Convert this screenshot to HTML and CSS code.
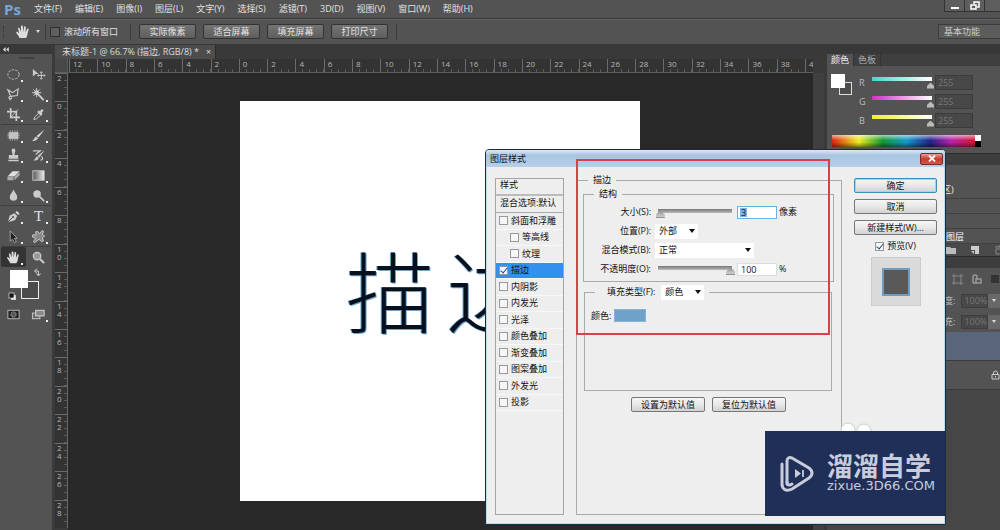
FILE: index.html
```html
<!DOCTYPE html>
<html lang="zh-CN">
<head>
<meta charset="utf-8">
<title>未标题-1</title>
<link rel="stylesheet" href="styles.css">
</head>
<body>
<header class="menubar">
  <span class="logo">Ps</span>
  <nav class="menus">
    <a href="#">文件(F)</a><a href="#">编辑(E)</a><a href="#">图像(I)</a><a href="#">图层(L)</a><a href="#">文字(Y)</a><a href="#">选择(S)</a><a href="#">滤镜(T)</a><a href="#">3D(D)</a><a href="#">视图(V)</a><a href="#">窗口(W)</a><a href="#">帮助(H)</a>
  </nav>
  <div class="winbtns">
    <button aria-label="最小化"><svg width="10" height="10" viewBox="0 0 10 10"><path d="M1 7h8" stroke="#fff" stroke-width="2"/></svg></button>
    <button aria-label="还原"><svg width="10" height="10" viewBox="0 0 10 10" fill="none" stroke="#fff" stroke-width="1.5"><path d="M4 3V1h5v5H7M1 4h5v4H1z"/></svg></button>
    <button aria-label="关闭"></button>
  </div>
</header>

<div class="options">
  <span class="grip"></span>
  <svg class="hand" width="16" height="16" viewBox="0 0 16 16"><use href="#i-hand"/></svg>
  <span class="caret light"></span>
  <span class="sep"></span>
  <label class="check dark"><input type="checkbox">滚动所有窗口</label>
  <span class="sep wide"></span>
  <div class="viewbtns">
    <button>实际像素</button><button>适合屏幕</button><button>填充屏幕</button><button>打印尺寸</button>
  </div>
  <span class="sep"></span>
  <button class="workspace-name">基本功能</button>
</div>

<main class="workspace">
  <aside class="tools">
    <div class="tools-head"><svg width="6" height="5" viewBox="0 0 6 5"><path d="M2.6 0v5L0 2.500zM5.800 0v5L3.200 2.500z" fill="#ddd"/></svg></div>
    <span class="tools-grip"></span>
    <div class="toolgroup">
      <button class="more" aria-label="椭圆选框"><svg viewBox="0 0 16 16"><ellipse cx="8" cy="8" rx="6" ry="5" fill="none" stroke="#ccc" stroke-dasharray="2.500 1.400"/></svg></button>
      <button aria-label="移动"><svg viewBox="0 0 16 16"><path d="M2 2l6 5.500H5L2 10z" fill="#ccc"/><path d="M11 5v8M7 9h8M9.800 6.200L11 5l1.200 1.200M9.800 11.800L11 13l1.200-1.200M8.200 7.800L7 9l1.200 1.200M13.800 7.800L15 9l-1.200 1.200" stroke="#ccc" fill="none"/></svg></button>
      <button class="more" aria-label="套索"><svg viewBox="0 0 16 16"><path d="M2 3l5 3 6-4-1 7-7 1zM5 10c-3 0-2 3 0 2.500S6 10 4 14" fill="none" stroke="#ccc" stroke-width="1.200"/></svg></button>
      <button class="more" aria-label="魔棒"><svg viewBox="0 0 16 16"><path d="M6.500 6.500L13.500 14" stroke="#ccc" stroke-width="2"/><path d="M6 1v10M1 6h10M2.500 2.500l7 7M9.500 2.500l-7 7" stroke="#ccc"/><circle cx="6" cy="6" r="2.500" fill="#ccc"/></svg></button>
      <button class="more" aria-label="裁剪"><svg viewBox="0 0 16 16"><path d="M5 1v10h10M1 5h10v10" fill="none" stroke="#ccc" stroke-width="1.800"/><path d="M5 11l8-8.500" stroke="#ccc" stroke-width=".8"/></svg></button>
      <button class="more" aria-label="吸管"><svg viewBox="0 0 16 16"><path d="M3 13.500l1-3L9 6l2 2-5 4.500z" fill="none" stroke="#ccc"/><path d="M7.500 4.500l4 4M9.500 6.500l3-3.500" stroke="#ccc" stroke-width="2.600"/></svg></button>
    </div>
    <div class="toolgroup">
      <button class="more" aria-label="修复画笔"><svg viewBox="0 0 16 16"><rect x="3" y="4.500" width="10" height="7" fill="#ccc"/><path d="M4.500 2.500v11M7 2.500v11M9.500 2.500v11M12 2.500v11M1.500 6h13M1.500 8h13M1.500 10h13" stroke="#bbb" stroke-width=".8"/></svg></button>
      <button class="more" aria-label="画笔"><svg viewBox="0 0 16 16"><path d="M14.500 1.500L8 10 6 8.500z" fill="#ddd"/><path d="M5.500 9l2 2C6 14 3 14 1 13.500 4 12.500 3 10 5.500 9z" fill="#ccc"/></svg></button>
      <button class="more" aria-label="图章"><svg viewBox="0 0 16 16"><path d="M6 2.500a2 2 0 0 1 4 0c0 2-1 3-1 5h4v4H3v-4h4c0-2-1-3-1-5zM2.500 12.500h11V14h-11z" fill="#ccc"/></svg></button>
      <button class="more" aria-label="历史画笔"><svg viewBox="0 0 16 16"><path d="M14.500 2.500L9 10 7 8.500zM6.500 9l2 1.500C7 13.500 5 13.500 2 13.500 5 12 4.500 10 6.500 9z" fill="#ccc"/><path d="M2 3h8L5 7M11 9c2 1 2 4-1 4" stroke="#ccc" stroke-width="1.300" fill="none"/></svg></button>
      <button class="more" aria-label="橡皮擦"><svg viewBox="0 0 16 16"><path d="M7 3.500h7.500L9 9H1.500z" fill="#ddd"/><path d="M1.500 9.500H8V13H1.500zM9 9.500l5.500-5.300v3.500L9 13z" fill="#aaa"/></svg></button>
      <button class="more" aria-label="渐变"><svg viewBox="0 0 16 16"><defs><linearGradient id="fade"><stop stop-color="#555"/><stop offset="1" stop-color="#eee"/></linearGradient></defs><rect x="2" y="3" width="12" height="10" fill="url(#fade)" stroke="#ccc"/></svg></button>
      <button class="more" aria-label="模糊"><svg viewBox="0 0 16 16"><path d="M8 1.500c1 3 4 5 4 8a4 4 0 0 1-8 0c0-3 3-5 4-8z" fill="#ccc"/></svg></button>
      <button class="more" aria-label="减淡"><svg viewBox="0 0 16 16"><circle cx="6.500" cy="6.500" r="4" fill="#ccc"/><path d="M9 9l5 5" stroke="#ccc" stroke-width="1.800"/></svg></button>
    </div>
    <div class="toolgroup">
      <button class="more" aria-label="钢笔"><svg viewBox="0 0 16 16"><path d="M2 14l2-7 5-2.500 3 3L9.500 12z" fill="#ccc"/><path d="M10 3.500l3 3 1.500-1.500-3-3z" fill="#ddd"/><path d="M2 14l5-5" stroke="#444"/><circle cx="7.500" cy="8.500" r="1" fill="#444"/></svg></button>
      <button class="more tletter" aria-label="文字">T</button>
      <button class="more" aria-label="路径选择"><svg viewBox="0 0 16 16"><path d="M4.500 2v11l2.500-2 2 3.500 2-1-2-3.500h3z" fill="#222" stroke="#bbb" stroke-width=".8"/></svg></button>
      <button class="more" aria-label="自定形状"><svg viewBox="0 0 16 16"><path d="M9 5l3-3.500 1.500 1L12 6l2.500 1.500L12 9.500l1.500 3-2 1L8.500 11 4 14.500l-1.500-1L5 10 1.500 8.500 2 6l3.500.5L5 3l2-.5z" fill="#888" stroke="#ccc" stroke-linejoin="round"/></svg></button>
    </div>
    <div class="toolgroup">
      <button class="more active" aria-label="抓手"><svg viewBox="0 0 16 16"><g id="i-hand"><path d="M4.500 14C4 12 1.500 10 1 8c.8-.8 2 0 3 1.500L3 4c1-.8 1.700 0 2 1l1 3L6 2c.9-.9 1.800-.3 1.900.5L8.300 8l.9-5.500c.9-.8 1.700-.2 1.600.8L10.600 8.500l1.600-3.700c.9-.6 1.600 0 1.400.9L12.500 10c0 2-1 3-1.500 4z" fill="#ddd"/></g></svg></button>
      <button aria-label="缩放"><svg viewBox="0 0 16 16"><circle cx="6.500" cy="6.500" r="4" fill="#999" stroke="#ccc" stroke-width="1.300"/><path d="M9.500 9.500l4.500 4.500" stroke="#ccc" stroke-width="2.200"/></svg></button>
    </div>
    <svg class="colors" width="50" height="37" viewBox="0 0 50 37"><rect x="20.500" y="14.500" width="17" height="17" fill="#4c4c4c" stroke="#eee"/><rect x="9" y="3" width="18" height="18" fill="#fff"/><path d="M34 4h3.500v4M36 1.500L33.500 4 36 6.500M35.500 6.500L37.500 9l2-2.500" fill="none" stroke="#ccc"/><rect x="10.500" y="28.500" width="4" height="4" fill="#fff" stroke="#ccc"/><rect x="8" y="26" width="5" height="5" fill="#111" stroke="#ccc" stroke-width=".8"/></svg>
    <div class="toolgroup modes">
      <button aria-label="快速蒙版"><svg viewBox="0 0 16 16"><rect x="2" y="3.500" width="12" height="9" fill="#222" stroke="#bbb"/><circle cx="8" cy="8" r="2.800" fill="#555" stroke="#bbb" stroke-dasharray="1.500 1"/></svg></button>
      <button class="more" aria-label="屏幕模式"><svg viewBox="0 0 16 16"><rect x="1.500" y="6.500" width="8" height="6" fill="#666" stroke="#ccc"/><rect x="5" y="3.500" width="9" height="6" fill="#888" stroke="#ddd"/></svg></button>
    </div>
  </aside>

  <section class="document">
    <div class="doc-tabs"><div class="doc-tab"><span>未标题-1 @ 66.7% (描边, RGB/8) *</span><button aria-label="关闭文档">×</button></div></div>
    <div class="hruler"><span class="corner"></span><div class="hmarks"><span>12</span><span>10</span><span>8</span><span>6</span><span>4</span><span>2</span><span>0</span><span>2</span><span>4</span><span>6</span><span>8</span><span>10</span><span>12</span><span>14</span><span>16</span><span>18</span><span>20</span><span>22</span><span>24</span><span>26</span><span>28</span><span>30</span><span>32</span><span>34</span><span>36</span><span>38</span></div><span class="hlast">4</span></div>
    <div class="stage">
      <div class="vruler"><span>2</span><span>0</span><span>2</span><span>4</span><span>6</span><span>8</span><span>10</span><span>12</span><span>14</span><span>16</span><span>18</span><span>20</span><span>22</span><span>24</span><span>26</span><span>28</span></div>
      <div class="pasteboard"><div class="artboard"><span>描</span><span>边</span></div></div>
      <div class="vscroll"></div>
    </div>
  </section>

  <aside class="panels">
    <div class="tabs"><button class="on">颜色</button><button>色板</button></div>
    <div class="color-panel">
      <svg width="22" height="24" viewBox="0 0 22 24"><rect x="8.500" y="9.500" width="12" height="12" fill="#4c4c4c" stroke="#ddd"/><rect width="14" height="14" y="1" fill="#fff"/></svg>
      <div class="channels">
        <div class="channel"><label for="r">R</label><input class="ramp cyan" type="range" max="255" value="255" aria-label="R"><input class="num" id="r" value="255"></div>
        <div class="channel"><label for="g">G</label><input class="ramp magenta" type="range" max="255" value="255" aria-label="G"><input class="num" id="g" value="255"></div>
        <div class="channel"><label for="b">B</label><input class="ramp yellow" type="range" max="255" value="255" aria-label="B"><input class="num" id="b" value="255"></div>
      </div>
    </div>
    <div class="spectrum"><span></span></div>
    <div class="band"></div>
    <div class="history">
      <div class="hrow tall">区)</div>
      <div class="hrow"></div>
      <div class="hrow"></div>
      <div class="hrow last">图层</div>
      <div class="hicons">
        <svg width="10" height="10" viewBox="0 0 10 10"><path d="M0 2h4l1 1h5v6H0z" fill="#bbb"/></svg>
        <svg width="10" height="10" viewBox="0 0 10 10"><path d="M1 1h8v8H5V5H1z" fill="#ccc"/><path d="M1 6l3 3V6z" fill="#ccc"/></svg>
        <svg width="10" height="10" viewBox="0 0 10 10"><path d="M1 2h8M2 4h6v5H2zM4 1h2" stroke="#888" fill="none"/></svg>
      </div>
    </div>
    <div class="band"></div>
    <div class="layers">
      <div class="licons">
        <svg width="11" height="11" viewBox="0 0 11 11"><path d="M2 2h7v7H2zM0 2h2V0M9 0v2h2M0 9h2v2M9 11V9h2" fill="none" stroke="#888"/></svg>
        <svg width="11" height="11" viewBox="0 0 11 11"><path d="M2 9V3a2 2 0 0 1 4 0v2M2 9h8V5H5v4" fill="none" stroke="#999" stroke-width="1.500"/></svg>
        <svg width="11" height="11" viewBox="0 0 11 11"><path d="M1 1h8v8H1z" fill="#333"/></svg>
      </div>
      <div class="lfield"><span>度:</span><output>100%</output><button aria-label="不透明度"><i class="caret light"></i></button></div>
      <div class="lfield"><span>充:</span><output>100%</output><button aria-label="填充"><i class="caret light"></i></button></div>
      <div class="layer selected"></div>
      <div class="layer"><svg width="9" height="10" viewBox="0 0 9 10"><path d="M2.500 4V3a2 2 0 0 1 4 0v1M1 4.500h7v4.500H1zM4.500 6v1.500" fill="none" stroke="#ccc"/></svg></div>
    </div>
    <div class="panel-foot"></div>
  </aside>
</main>

<section class="dialog" role="dialog" aria-label="图层样式">
  <div class="title"><h1>图层样式</h1><button class="close" aria-label="关闭"><svg width="8" height="7" viewBox="0 0 8 7"><path d="M1 .5l6 6M7 .5l-6 6" stroke="#fff" stroke-width="1.800"/></svg></button></div>
  <div class="body">
    <div class="styles">
      <div class="shead">样式</div>
      <div class="shead blend">混合选项:默认</div>
      <div class="slist">
        <label class="check"><input type="checkbox">斜面和浮雕</label>
        <label class="check sub"><input type="checkbox">等高线</label>
        <label class="check sub"><input type="checkbox">纹理</label>
        <label class="check current"><input type="checkbox" checked>描边</label>
        <label class="check"><input type="checkbox">内阴影</label>
        <label class="check"><input type="checkbox">内发光</label>
        <label class="check"><input type="checkbox">光泽</label>
        <label class="check"><input type="checkbox">颜色叠加</label>
        <label class="check"><input type="checkbox">渐变叠加</label>
        <label class="check"><input type="checkbox">图案叠加</label>
        <label class="check"><input type="checkbox">外发光</label>
        <label class="check"><input type="checkbox">投影</label>
      </div>
    </div>

    <fieldset class="stroke">
      <legend>描边</legend>
      <fieldset class="structure">
        <legend>结构</legend>
        <div class="rows">
          <label for="size">大小(S):</label>
          <div class="ctl"><input class="slide" type="range" max="250" value="3" aria-label="大小"><input class="box focus" id="size" value="3"><span>像素</span></div>
          <label for="pos">位置(P):</label>
          <div class="ctl"><span class="pick short"><select id="pos"><option>外部</option></select><i class="caret"></i></span></div>
          <label for="mode">混合模式(B):</label>
          <div class="ctl"><span class="pick long"><select id="mode"><option>正常</option></select><i class="caret"></i></span></div>
          <label for="opa">不透明度(O):</label>
          <div class="ctl"><input class="slide" type="range" value="100" aria-label="不透明度"><input class="box" id="opa" value="100"><span>%</span></div>
        </div>
      </fieldset>
      <fieldset class="fill">
        <legend><label for="filltype">填充类型(F):</label><span class="pick short"><select id="filltype"><option>颜色</option></select><i class="caret"></i></span></legend>
        <div class="fillcolor"><span>颜色:</span><button aria-label="描边颜色"></button></div>
      </fieldset>
      <div class="defaults"><button class="btn">设置为默认值</button><button class="btn">复位为默认值</button></div>
    </fieldset>

    <div class="actions">
      <button class="btn primary">确定</button>
      <button class="btn">取消</button>
      <button class="btn">新建样式(W)...</button>
      <label class="check preview"><input type="checkbox" checked>预览(V)</label>
      <div class="thumb"><span></span></div>
    </div>
  </div>
  <div class="highlight"></div>
</section>

<div class="brand">
  <svg class="puffs" width="32" height="9" viewBox="0 0 32 9"><circle cx="8" cy="8" r="7" fill="#fff" stroke="#ccc"/><circle cx="24" cy="9" r="7" fill="#fff" stroke="#ccc"/></svg>
  <svg width="36" height="38" viewBox="0 0 36 38" fill="none" stroke="#c9cddb" stroke-linecap="round" stroke-linejoin="round"><path d="M8 29V6c0-3 2-4 5-3l17 10c4 3 4 7 0 10L13 34c-6 3-10 0-10-5V9" stroke-width="3"/><path d="M8 27c0 3 2 4 5 2" stroke-width="3"/><path d="M16 14v9l6-4.500z" fill="#c9cddb" stroke="none"/><path d="M24 15v7" stroke-width="1.800" stroke-linecap="butt"/></svg>
  <div class="brand-text"><strong>溜溜自学</strong><span>zixue.3D66.COM</span></div>
</div>
</body>
</html>
```
FILE: styles.css
```css
* { box-sizing: border-box; }
body {
  margin: 0; height: 100vh; overflow: hidden; position: relative;
  display: flex; flex-direction: column;
  background: #535353; color: #e2e2e2;
  font: 9px/12px "Open Sans", "Noto Sans CJK SC", sans-serif;
}
button, input, select, output { font: inherit; color: inherit; margin: 0; padding: 0; border: 0; background: none; border-radius: 0; }
button { display: flex; align-items: center; justify-content: center; white-space: nowrap; }
a { color: inherit; text-decoration: none; }
svg { display: block; flex: none; }
.caret { width: 0; height: 0; border: 3px solid transparent; border-top: 4px solid #111; border-bottom: 0; }
.caret.light { border-width: 3px 2px 0; border-top-color: #ddd; }

/* menu bar */
.menubar { flex: none; height: 18px; display: flex; align-items: center; padding-left: 4px; }
.logo { width: 30px; color: #76a5d8; font: bold 15px/16px "Open Sans", sans-serif; }
.menus { display: flex; gap: 13px; white-space: nowrap; }
.winbtns { margin-left: auto; align-self: flex-start; display: flex; height: 12px; border: 1px solid #333; border-width: 0 0 1px 1px; }
.winbtns button { width: 20px; border-right: 1px solid #333; background: #5e5e5e; }
.winbtns button:last-child { width: 15px; border: 0; }

/* options bar */
.options { flex: none; height: 27px; display: flex; align-items: center; border: 1px solid #383838; border-width: 1px 0; box-shadow: inset 0 1px #626262; padding-left: 3px; }
.grip { width: 2px; height: 12px; border-left: 1px dotted #333; margin-right: 10px; }
.hand { margin-right: 5px; }
.sep { width: 1px; height: 16px; background: #3c3c3c; margin: 0 4px 0 5px; }
.sep.wide { margin: 0 8px 0 12px; }
.check { display: flex; align-items: center; gap: 3px; white-space: nowrap; }
.check input { appearance: none; width: 9px; height: 9px; border: 1px solid #999; background: #f6f6f6; display: grid; place-items: center; }
.check input:checked::before { content: ""; width: 3px; height: 6px; margin-top: -2px; border: solid #234a80; border-width: 0 1px 1px 0; transform: rotate(40deg); }
.check.dark { gap: 4px; }
.check.dark input { width: 10px; height: 10px; background: #5f5f5f; border-color: #2f2f2f; }
.viewbtns { display: flex; gap: 7px; }
.viewbtns button { width: 57px; height: 15px; border: 1px solid #333; border-radius: 2px; background: linear-gradient(#747474, #5e5e5e); }
.viewbtns + .sep { margin-left: 8px; }
.workspace-name { margin-left: auto; width: 62px; height: 15px; border: 1px solid #3d3d3d; border-right: 0; background: #5c5c5c; justify-content: flex-start; padding-left: 5px; color: #ccc; }

.workspace { flex: 1; min-height: 0; display: flex; background: #3a3a3a; }

/* tools */
.tools { width: 52px; background: #535353; display: flex; flex-direction: column; }
.tools-head { height: 9px; background: #383838; padding: 2px 3px; }
.tools-grip { width: 15px; height: 2px; background: #404040; margin: 3px 0 5px 19px; }
.toolgroup { display: grid; grid-template-columns: 25px 25px; grid-auto-rows: 20px; margin: 0 1px; border-bottom: 1px solid #404040; }
.toolgroup:nth-last-child(-n+3) { border: 0; }
.toolgroup button { position: relative; }
.toolgroup svg { width: 15px; height: 15px; }
.toolgroup .more::after { content: ""; position: absolute; right: 3px; bottom: 2px; width: 2px; height: 2px; background: #eee; }
.tools .active { background: #343434; border-radius: 2px; }
.tletter { font: 15px/16px "Liberation Serif", serif; }
.colors { margin-left: 1px; }

/* document */
.document { flex: 1; min-width: 0; margin-left: 3px; display: flex; flex-direction: column; }
.doc-tabs { height: 14px; background: #393939; display: flex; }
.doc-tab { display: flex; gap: 7px; align-items: center; background: #4d4d4d; padding: 0 4px 0 7px; border-right: 1px solid #2b2b2b; white-space: nowrap; color: #ddd; }
.hruler { height: 14px; display: flex; background: #333; border-bottom: 1px solid #5c5c5c; margin-right: 14px; font-size: 8px; color: #b5b5b5; }
.corner { width: 13px; background: #484848; border-right: 1px solid #5a5a5a; margin-right: 1px; }
.hmarks { flex: 1; display: grid; grid-template-columns: repeat(26, 1fr); }
.hmarks span, .hlast { border-left: 1px solid #6b6b6b; padding-left: 3px; line-height: 10px;
  background: repeating-linear-gradient(90deg, transparent 0 6px, #5a5a5a 6px 7px) left bottom / 100% 3px no-repeat; }
.hlast { width: 8px; overflow: hidden; background: none; }
.stage { flex: 1; min-height: 0; display: flex; }
.vruler { width: 13px; height: 455px; display: grid; grid-template-rows: repeat(16, 1fr); background: #333; border-right: 1px solid #666; font-size: 8px; color: #b5b5b5; }
.vruler span { border-top: 1px solid #6b6b6b; padding: 0 5px 0 2px; line-height: 8px; word-break: break-all;
  background: repeating-linear-gradient(transparent 0 6px, #5a5a5a 6px 7px) right top / 3px 100% no-repeat; }
.pasteboard { flex: 1; min-width: 0; background: #282828; padding: 28px 0 0 172px; }
.artboard { width: 400px; height: 400px; background: #fff; color: #06101f; padding: 127px 0 0 106px; display: flex; gap: 13px;
  font: 300 88px/120px "Noto Sans CJK SC", sans-serif; white-space: nowrap; overflow: hidden;
  text-shadow: 1px 1px #6fa3c8, -1px 0 #6fa3c8; }
.vscroll { width: 11px; background: #404040; margin-right: 3px; }

/* panels */
.panels { width: 173px; background: #535353; display: flex; flex-direction: column; border-top: 9px solid #383838; }
.tabs { height: 12px; display: flex; background: #3f3f3f; color: #aaa; }
.tabs button { width: 27px; border-right: 1px solid #333; }
.tabs .on { background: #535353; color: #eee; }
.color-panel { display: flex; padding: 7px 0 0 4px; height: 68px; }
.color-panel > svg { margin-right: 6px; }
.channel { display: flex; align-items: center; height: 19px; color: #bbb; }
.channel label { width: 11px; }
.ramp { appearance: none; width: 64px; height: 13px; background: linear-gradient(90deg, var(--c), #fff) 2px 1px / 60px 4px no-repeat; margin-right: 1px; }
.cyan { --c: #3fd9cf; } .magenta { --c: #d22fc8; } .yellow { --c: #eef02c; }
.ramp::-webkit-slider-thumb { appearance: none; width: 7px; height: 6px; margin-top: 6px; background: #bbb; clip-path: polygon(50% 0, 100% 60%, 100% 100%, 0 100%, 0 60%); }
.num { width: 38px; height: 15px; background: #484848; border: 1px solid #3b3b3b; color: #777; padding-left: 2px; }
.spectrum { width: 149px; height: 12px; margin: 1px 0 6px 5px; display: flex; justify-content: flex-end;
  background: linear-gradient(#fff9, #fff0 45%, #0000 60%, #0007), linear-gradient(90deg, #d21, #ee2 18%, #193 34%, #19c 50%, #228 66%, #b2a 80%, #d11); }
.spectrum span { width: 6px; background: linear-gradient(#fff 50%, #000 50%); }
.band { flex: none; height: 12px; background: #3d3d3d; border-top: 1px solid #2c2c2c; }
.history { height: 91px; }
.hrow { height: 15px; border-bottom: 1px solid #404040; padding-left: 119px; line-height: 15px; color: #eee; }
.hrow.tall { height: 34px; padding: 18px 0 0 115px; line-height: 13px; }
.hrow.last { color: #fff; }
.hicons, .licons { display: flex; align-items: center; gap: 14px; height: 12px; padding-left: 119px; overflow: hidden; }
.hicons { background: #4a4a4a; }
.licons { height: 22px; gap: 8px; padding-left: 125px; }
.layers .licons { flex: none; }
.lfield { display: flex; align-items: center; height: 21px; padding-left: 117px; gap: 6px; color: #bbb; }
.lfield output { width: 28px; height: 14px; background: #484848; color: #777; border: 1px solid #3e3e3e; padding-left: 2px; }
.lfield button { width: 14px; height: 14px; background: #686868; margin-left: -6px; }
.layer { height: 29px; border-bottom: 1px solid #3c3c3c; display: flex; align-items: center; justify-content: flex-end; }
.layer.selected { background: #59657a; }
.panel-foot { flex: 1; background: #464646; }

/* layer style dialog */
.dialog { position: absolute; left: 485px; top: 149px; width: 461px; color: #111; background: #eee; border: 1px solid #1d2c38; border-radius: 4px 4px 0 0; box-shadow: inset 0 0 0 1px #b5dff0; }
.title { height: 17px; display: flex; align-items: center; justify-content: space-between; padding: 0 2px 0 4px; border-radius: 3px 3px 0 0; background: linear-gradient(#dfe9f5, #a9c4e2 30%, #b8cfe8); }
.title h1 { margin: 0; font: inherit; }
.close { width: 23px; height: 12px; border: 1px solid #7a2a2a; border-radius: 2px; background: linear-gradient(#e3a095, #c6392c 50%, #cf5a49); }
.body { display: flex; gap: 12px; padding: 7px 8px 9px 9px; }
.styles { width: 69px; height: 337px; margin-top: 4px; border: 1px solid #a5a5a5; }
.shead { height: 17px; padding: 0 4px; line-height: 12px; border-bottom: 2px solid #bbb; white-space: nowrap; }
.blend { border-bottom: 1px solid #aaa; line-height: 13px; }
.slist { height: 198px; display: grid; grid-auto-rows: 1fr; }
.slist .check { padding-left: 3px; border-bottom: 1px solid #f8f8f8; }
.slist .sub { padding-left: 14px; }
.slist .current { background: #3390ee; }
fieldset { margin: 0; padding: 0; border: 1px solid #aaa; min-width: 0; }
legend { height: 12px; padding: 0 5px; margin-left: 10px; }
.stroke { width: 266px; padding: 2px 7px 0 6px; }
.stroke > legend { margin-left: 5px; }
.structure { height: 94px; }
.rows { display: grid; grid-template-columns: 67px 1fr; grid-auto-rows: 18px; gap: 1px 4px; padding-top: 3px; align-items: center; }
.rows label { text-align: right; white-space: nowrap; }
.ctl { display: flex; align-items: center; gap: 2px; }
.slide { appearance: none; width: 80px; height: 12px; background: linear-gradient(#777, #bbb) 3px 3px / 74px 4px no-repeat; }
.slide::-webkit-slider-thumb { appearance: none; width: 9px; height: 8px; margin-top: 4px; background: linear-gradient(#888, #ccc 80%, #777); clip-path: polygon(50% 0, 100% 60%, 100% 100%, 0 100%, 0 60%); }
.box { width: 40px; height: 13px; background: #fff; border: 1px solid #ddd; padding-left: 3px; }
.focus { border-color: #6cb0dd; background: linear-gradient(#7db4e8, #7db4e8) 2px 1px / 7px 9px no-repeat #fff; }
.pick { display: grid; align-items: center; background: #fff; }
.pick > * { grid-area: 1 / 1; }
.pick select { appearance: none; width: 100%; height: 15px; padding-left: 4px; }
.pick .caret { justify-self: end; margin-right: 3px; pointer-events: none; }
.short { width: 43px; }
.long { width: 99px; }
.fill { height: 105px; margin: 4px 2px 0 1px; }
.fill legend { display: flex; align-items: center; gap: 6px; padding-left: 12px; }
.fillcolor { display: flex; align-items: center; gap: 3px; padding: 11px 0 0 6px; }
.fillcolor button { width: 32px; height: 13px; background: #6fa2c9; border: 1px solid #8fb3cf; }
.defaults { display: flex; justify-content: center; gap: 7px; margin-top: 6px; }
.btn { height: 15px; border: 1px solid #777; border-radius: 2px; background: linear-gradient(#f6f6f6, #e8e8e8 50%, #d2d2d2); }
.defaults .btn { width: 74px; }
.primary { border-color: #3c8db8; box-shadow: inset 0 0 0 1px #8fdcf5; }
.actions { flex: 1; margin-top: 4px; display: flex; flex-direction: column; gap: 6px; }
.preview { align-self: center; height: 10px; }
.thumb { align-self: center; width: 50px; height: 49px; background: #dadada; border: 1px solid #ccc; display: grid; place-items: center; }
.thumb span { width: 28px; height: 28px; background: #595959; border: 2px solid #6f9dc2; }
.highlight { position: absolute; left: 90px; top: 9px; width: 254px; height: 176px; border: 2px solid #d8414a; pointer-events: none; }

/* brand plate */
.brand { position: absolute; left: 765px; top: 431px; width: 180px; height: 85px; background: #202f57; color: #c9cddb; display: flex; align-items: center; gap: 12px; padding-left: 14px; }
.puffs { position: absolute; left: 75px; top: -9px; }
.brand-text { display: flex; flex-direction: column; padding-bottom: 4px; }
.brand-text strong { font: bold 26px/28px "Noto Sans CJK SC", sans-serif; }
.brand-text span { font: 13px/14px "DejaVu Sans", sans-serif; }
```
